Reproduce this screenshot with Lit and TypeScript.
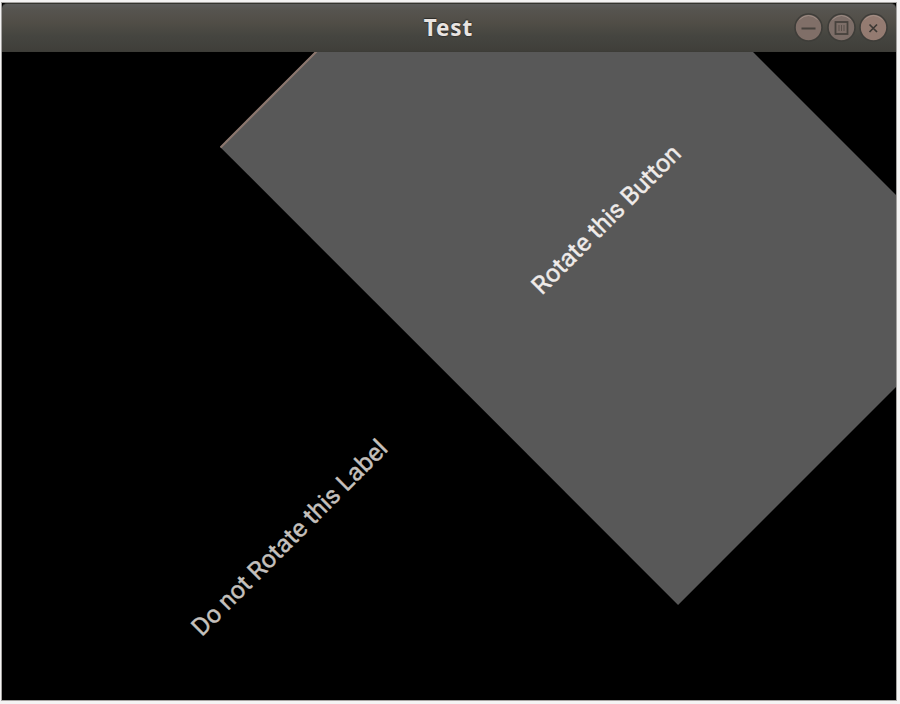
import { LitElement, html, css, svg } from "lit";
import { customElement } from "lit/decorators.js";

@customElement("title-bar")
class TitleBar extends LitElement {
  static styles = css`
    :host {
      display: grid;
      grid-template-columns: 1fr auto 1fr;
      align-items: center;
      height: 49px;
      box-sizing: border-box;
      padding: 0 8px 0 8px;
      border-top: 1px solid #34342f;
      background: linear-gradient(#5b5b5a 0, #56544f 6px, #514e47 18px, #454540 32px, #403f3a 46px, #3a3a35 49px);
      border-radius: 5px 5px 0 0;
    }
    .title {
      grid-column: 2;
      font: 700 22.5px/30px "Noto Sans", sans-serif;
      letter-spacing: 0.9px;
      margin: -1px 1px 0 0;
      color: #e9e4e1;
      text-shadow: 0 -1px 1px #2c2b28, 0 1px 1px #33322f;
    }
    .controls {
      display: flex;
      justify-content: flex-end;
      gap: 3.5px;
      margin-top: -1px;
    }
    svg { display: block; width: 29px; height: 29px; }
  `;
  private control(fill: string, glyph: unknown) {
    return html`<svg viewBox="0 0 29 29">
      <circle cx="14.5" cy="14.5" r="13.5" fill=${fill} stroke="#3e3d39" stroke-width="1.6" />
      <path d="M5.5 6.5Q14.5 -1.5 23.5 6.5" fill="none" stroke="#a99990" stroke-width="1" opacity=".7" />
      ${glyph}
    </svg>`;
  }
  render() {
    return html`
      <span class="title">Test</span>
      <div class="controls">
        ${this.control("#806f68", svg`<path d="M7.5 15.5H21.5" stroke="#47423d" stroke-width="2" />`)}
        ${this.control("#7d6e68", svg`<rect x="8.5" y="9" width="12" height="12" fill="none" stroke="#47423d" stroke-width="1.8" /><path d="M12 12V18M14.5 12V18M17 12V18" stroke="#5a504a" stroke-width="1" />`)}
        ${this.control("#947b71", svg`<path d="M10.5 11.5L18 19M18 11.5L10.5 19" stroke="#3c3834" stroke-width="1.7" />`)}
      </div>`;
  }
}

@customElement("app-root")
class AppRoot extends LitElement {
  static styles = css`
    :host {
      display: flex;
      flex-direction: column;
      box-sizing: border-box;
      width: 900px;
      height: 704px;
      padding: 3px 4px 4px 2px;
      background: #f4f3f3;
    }
    .window {
      flex: 1;
      display: flex;
      flex-direction: column;
      background: #000;
      box-shadow: 0 0 0 1px #a5a3a1;
    }
    .canvas {
      flex: 1;
      position: relative;
      overflow: hidden;
      background: #000;
    }
    .button, .label {
      position: absolute;
      display: flex;
      align-items: center;
      justify-content: center;
      width: 443.6px;
      height: 648px;
      box-sizing: border-box;
      transform: rotate(-45deg);
      font: 24.9px/30px Roboto, sans-serif;
      -webkit-text-stroke: 0.4px currentColor;
      white-space: nowrap;
    }
    .button {
      left: 382.4px;
      top: -157.3px;
      background: #585858;
      border-top: 2px solid #8c776e;
      color: #efebe9;
    }
    .label {
      left: 65.5px;
      top: 161.8px;
      color: #c5c0bd;
    }
  `;
  render() {
    return html`
      <div class="window">
        <title-bar></title-bar>
        <div class="canvas">
          <div class="button">Rotate this Button</div>
          <div class="label">Do not Rotate this Label</div>
        </div>
      </div>`;
  }
}
